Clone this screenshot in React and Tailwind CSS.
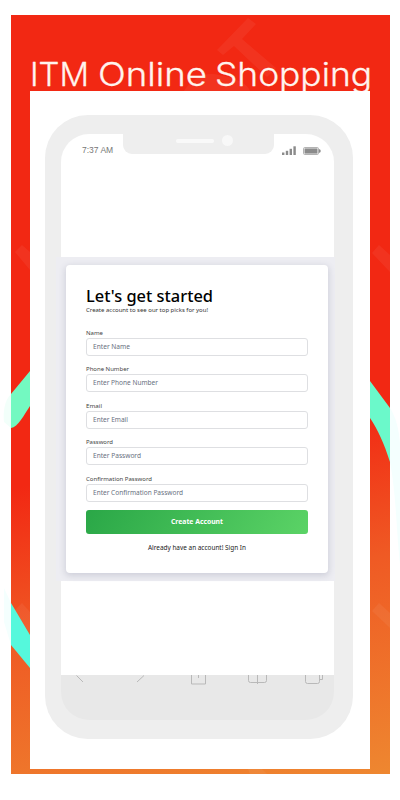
import clsx from "clsx";

const fields = [
	{ label: "Name", placeholder: "Enter Name", labelWidth: "w-[17px]", width: "w-[37px]" },
	{ label: "Phone Number", placeholder: "Enter Phone Number", labelWidth: "w-[43px]", width: "w-[65px]" },
	{ label: "Email", placeholder: "Enter Email", labelWidth: "w-[16px]", width: "w-[35px]" },
	{ label: "Password", placeholder: "Enter Password", labelWidth: "w-[27px]", width: "w-[48px]" },
	{ label: "Confirmation Password", placeholder: "Enter Confirmation Password", labelWidth: "w-[66px]", width: "w-[90px]" },
];

const titleWords = [
	{ word: "ITM", x: 0, width: 59 },
	{ word: "Online", x: 68, width: 109 },
	{ word: "Shopping", x: 185, width: 157 },
];

const BannerArt = () => {
	return (
		<svg className="absolute left-0 top-0" width="400" height="800" viewBox="0 0 400 800" fill="none">
			<g fill="#fff" fillOpacity="0.055">
				<path d="M217 50L248 18L256 24L242 39L276 68L267 77L234 46L223 55Z" />
				<path d="M184 91C192 78 206 71 219 75C236 78 248 84 250 91Z" />
				<path d="M15 252L22 245L30 252V270Z" />
				<path d="M372 253L379 245L390 255V272Z" />
				<path d="M15 610L22 603L30 612V634Z" />
				<path d="M372 611L379 603L390 613V628Z" />
				<path d="M248 769H262L267 774H250Z" />
			</g>
			<path d="M11 394L30 371V406C24 415 18 427 11 428Z" fill="#73f9c1" />
			<path d="M11 603L30 635V668L11 645Z" fill="#55f8dc" />
			<path d="M370 381L390 408V462C384 443 378 430 370 418Z" fill="#6bf9ca" />
			<path d="M11 394C4 401 3 413 4 422L11 428Z" fill="#f2fffa" />
			<path d="M11 603L4 588V622L11 645Z" fill="#f4fffe" />
			<path d="M390 408C396 417 399 430 400 443V565C396 525 396 493 390 462Z" fill="#f4fffe" />
		</svg>
	);
};

const StatusIcons = () => {
	return (
		<svg width="40" height="10" viewBox="0 0 40 10" fill="#8b8b8b">
			<rect x="1" y="6.5" width="2.4" height="2.5" />
			<rect x="4.8" y="4.8" width="2.4" height="4.2" />
			<rect x="8.6" y="2.8" width="2.4" height="6.2" />
			<rect x="12.4" y="0.3" width="2.4" height="8.7" />
			<rect x="22.5" y="1.5" width="15" height="7" rx="1.2" fill="none" stroke="#aaa" strokeWidth="0.9" />
			<rect x="23.5" y="2.4" width="13" height="5.2" />
			<path d="M38 3L39.6 4V6L38 7Z" />
		</svg>
	);
};

const Toolbar = () => {
	return (
		<svg className="block" width="273" height="45" viewBox="0 0 273 45" fill="none" stroke="#b9b9b9">
			<path d="M15.5 0.5L22 7M83 0.5L76 7" />
			<path d="M130.5 0V9H144.5V0M137.5 0V3" />
			<path d="M187.5 0V5.5Q187.5 7.5 189.5 7.5H203.5Q205.5 7.5 205.5 5.5V0M196.5 0V9" />
			<path d="M244.5 0V6.500Q244.5 8.500 246.5 8.500H256.5Q258.5 8.500 258.5 6.500V0M258.5 4.5H261.5V0" />
		</svg>
	);
};

// one line of text fitted to a fixed width
const Line = ({ children, className }) => {
	return (
		<svg className={clsx("block overflow-visible", className)} height="8">
			<text x="0" y="6.3" textLength="100%" lengthAdjust="spacingAndGlyphs" fill="currentColor">
				{children}
			</text>
		</svg>
	);
};

const Field = ({ field }) => {
	return (
		<div className="h-[36.5px]">
			<Line className={clsx("text-[5.8px] text-[#444]", field.labelWidth)}>{field.label}</Line>
			<div className="mt-px flex h-[18px] items-center rounded-[3px] border border-[#dedfe2] px-[6px]">
				<Line className={clsx("text-[6.5px] text-[#687080]", field.width)}>{field.placeholder}</Line>
			</div>
		</div>
	);
};

const SignUp = () => {
	return (
		<div className="-ml-[5px] mt-[103px] h-[324px] w-[279px] bg-[#ededf2] pl-[9.5px] pt-[8px]">
			<div className="h-[308px] w-[262.5px] rounded-[4px] bg-white px-[20.5px] pt-[20px] shadow-[0_2px_6px_1px_rgba(90,95,125,0.2)]">
				<h1 className="text-black">
					<svg className="block overflow-visible" width="127" height="21">
						<text x="0" y="16.5" textLength="127" lengthAdjust="spacingAndGlyphs" fontSize="16.5" fontWeight="500" fill="currentColor">
							Let's get started
						</text>
					</svg>
				</h1>
				<Line className="w-[122px] text-[6px] text-[#333]">Create account to see our top picks for you!</Line>
				<div className="mt-[14.5px]">
					{fields.map((field) => (
						<Field key={field.label} field={field} />
					))}
				</div>
				<button className="-mt-[1.5px] flex h-[24px] w-full items-center justify-center rounded-[3px] bg-linear-[120deg,#2aa747,#5bd366] text-white">
					<Line className="w-[52px] text-[6.8px] font-bold">Create Account</Line>
				</button>
				<div className="mt-[10px] flex justify-center">
					<Line className="w-[98px] text-[6.3px] text-[#222]">Already have an account! Sign In</Line>
				</div>
			</div>
		</div>
	);
};

const Phone = () => {
	return (
		<div className="ml-[15px] h-[624px] w-[308px] rounded-[43px] bg-[#eee] pl-[16px] pt-[19px]">
			<div className="h-[586px] w-[273px] rounded-[28px] bg-[linear-gradient(#fff_541px,#e8e8e8_541px)]">
				<div className="flex h-[20px]">
					<div className="w-[62px] pl-[21px] pt-[10px] font-['Liberation_Sans',sans-serif] text-[8.5px] leading-[12px] whitespace-nowrap text-[#777]">
						7:37 AM
					</div>
					<div className="flex h-[20px] w-[151px] items-start justify-center rounded-b-[9px] bg-[#eee]">
						<div className="ml-[12px] mt-[5px] h-[4px] w-[38px] rounded-full bg-[#f9f9f9]" />
						<div className="ml-[8px] mt-[1px] size-[11px] rounded-full bg-[#f8f8f8]" />
					</div>
					<div className="ml-[7px] mt-[12px]">
						<StatusIcons />
					</div>
				</div>
				<SignUp />
				<div className="mt-[94px]">
					<Toolbar />
				</div>
			</div>
		</div>
	);
};

const App = () => {
	return (
		<div className="relative h-[800px] w-[400px] overflow-hidden bg-white px-[11px] pt-[15px] font-['Noto_Sans',sans-serif]">
			<div className="h-[759px] w-[379px] bg-[linear-gradient(167deg,#f22813_56%,#ef5a24_74%,#ee8730_100%)] px-[19px]">
				<BannerArt />
				<div className="relative h-[76px] pt-[39px] text-[#fff4ee]">
					<svg className="block overflow-visible" width="343" height="42" fontFamily="Inter" fontWeight="300">
						{titleWords.map(({ word, x, width }) => (
							<text
								key={word}
								x={x}
								y="31.5"
								textLength={width}
								lengthAdjust="spacingAndGlyphs"
								fontSize="32.5"
								fill="currentColor"
								stroke="currentColor"
								strokeWidth="0.3"
								strokeLinejoin="round"
							>
								{word}
							</text>
						))}
					</svg>
				</div>
				<div className="relative h-[678px] w-[340px] bg-white pt-[24px]">
					<Phone />
				</div>
			</div>
		</div>
	);
};

export default App;
